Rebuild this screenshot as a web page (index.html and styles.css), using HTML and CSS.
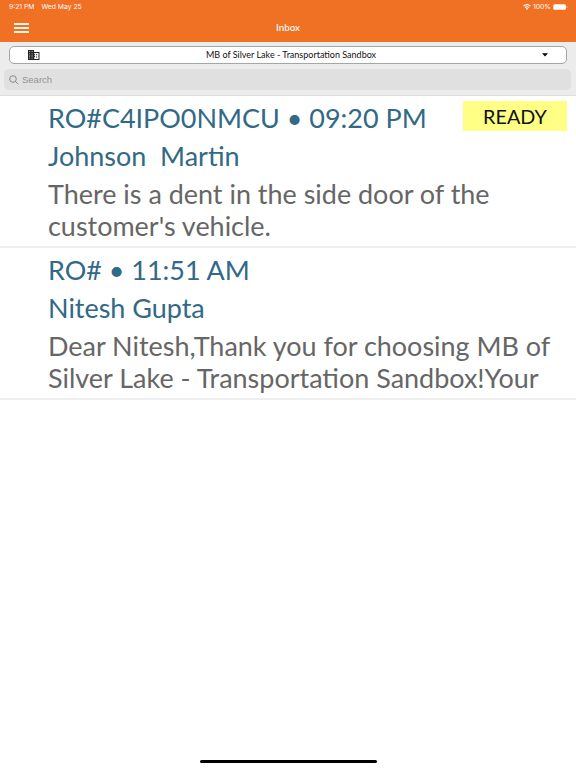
FILE: index.html
```html
<!DOCTYPE html>
<html lang="en">
<head>
<meta charset="utf-8">
<title>Inbox</title>
<link rel="stylesheet" href="styles.css">
</head>
<body>
<header class="top">
  <div class="status">
    <span class="time">9:21 PM</span><span class="date">Wed May 25</span>
    <svg class="wifi" width="8" height="6" viewBox="0 0 8 6" fill="none" stroke="#fff" stroke-width="1.1"><path d="M.5 2.2Q4-1 7.500 2.200M1.900 3.700Q4 1.900 6.100 3.700"/><path d="M2.800 4.500L4 6 5.200 4.500Q4 3.700 2.800 4.500Z" fill="#fff" stroke="none"/></svg>
    <span class="percent">100%</span>
    <svg class="battery" width="15" height="6" viewBox="0 0 15 6"><rect x=".25" y=".25" width="12.700" height="5.500" rx="1.600" fill="#fff"/><path d="M13.700 2v2q.8-.3.8-1t-.8-1Z" fill="#fff" opacity=".7"/></svg>
  </div>
  <nav class="nav">
    <div class="menu"><i></i><i></i><i></i></div>
    <h1 class="title">Inbox</h1>
  </nav>
</header>
<section class="filters">
  <div class="select">
    <svg class="building" width="12" height="10" viewBox="0 0 12 10"><path fill="#222" fill-rule="evenodd" d="M0 0h6v2h5.500v8H0ZM1.200 1.200v.8h1v-.8Zm2.400 0v.8h1v-.8ZM1.200 3.400v.8h1v-.8Zm2.400 0v.8h1v-.8ZM1.200 5.600v.8h1v-.8Zm2.400 0v.8h1v-.8ZM1.200 7.800v.8h1v-.8Zm2.400 0v.8h1v-.8ZM6.300 3v1.200h.7v1h-.7V6H7v1h-.7V9h4.200V3ZM8 4.200h1.200v1H8Zm0 2.200h1.200v1H8Z"/></svg>
    <span class="dealer">MB of Silver Lake - Transportation Sandbox</span>
    <svg class="caret" width="6" height="4" viewBox="0 0 6 4"><path d="M0 .3h6L3 3.600Z"/></svg>
  </div>
  <div class="search">
    <svg width="10" height="10" viewBox="0 0 10 10" fill="none" stroke="#7e7e82" stroke-width=".9"><circle cx="4" cy="4" r="3.300"/><path d="M6.400 6.400L9.300 9.300"/></svg>
    <span class="placeholder">Search</span>
  </div>
</section>
<main>
  <article class="message">
    <div class="order">RO#C4IPO0NMCU • 09:20 PM</div>
    <div class="name">Johnson&nbsp; Martin</div>
    <p class="preview">There is a dent in the side door of the<br>customer's vehicle.</p>
    <span class="badge">READY</span>
  </article>
  <article class="message">
    <div class="order">RO# • 11:51 AM</div>
    <div class="name">Nitesh Gupta</div>
    <p class="preview">Dear Nitesh,Thank you for choosing MB of<br>Silver Lake - Transportation Sandbox!Your</p>
  </article>
</main>
<div class="home"></div>
</body>
</html>
```
FILE: styles.css
```css
* { box-sizing: border-box; }
body {
  margin: 0;
  height: 768px;
  display: flex;
  flex-direction: column;
  background: #fff;
  font-family: Lato, sans-serif;
  overflow: hidden;
}
.top { height: 42px; background: #f07024; color: #fff; }
.status {
  height: 14px;
  display: flex;
  align-items: center;
  padding: 0 8px 0 9px;
  font: 400 6.8px/14px Inter, sans-serif;
}
.date { margin-left: 7px; }
.wifi { margin-left: auto; }
.percent { margin: 0 2px; }
.nav {
  height: 27px;
  display: grid;
  grid-template-columns: 1fr auto 1fr;
  align-items: center;
}
.menu { width: 15px; margin: 1px 0 0 14px; display: grid; gap: 2px; }
.menu i { height: 2.300px; background: #fff6e6; }
.title { margin: 0; font: 500 9.800px/27px Lato, sans-serif; }
.filters {
  height: 54px;
  padding: 4px 9px 0;
  background: #ececec;
  border-bottom: 1px solid #dedede;
}
.select {
  height: 18px;
  border: 1px solid #a2a7a7;
  border-radius: 5px;
  background: #fff;
  display: grid;
  grid-template-columns: 1fr auto 1fr;
  align-items: center;
}
.building { margin-left: 18px; }
.dealer { font-size: 9px; line-height: 16px; color: #111; margin-left: 6px; }
.caret { justify-self: end; margin-right: 18px; }
.search {
  height: 21px;
  margin: 5px -4px 0 -5px;
  padding-left: 5px;
  border-radius: 5px;
  background: #e0e0e0;
  display: flex;
  align-items: center;
  gap: 3px;
}
.placeholder { font: 9.5px/20px "Liberation Sans", sans-serif; color: #929296; }
.message {
  position: relative;
  height: 152px;
  padding: 4px 0 0 48px;
  border-bottom: 2px solid #efefef;
  font-size: 26.96px;
  white-space: nowrap;
}
.order, .name { height: 38px; line-height: 36px; color: #316986; }
.preview { margin: 2px 0 0; line-height: 32px; color: #666; }
.badge {
  position: absolute;
  top: 5px;
  right: 9px;
  width: 104px;
  height: 30px;
  background: #ffff85;
  color: #111;
  font-size: 19.8px;
  line-height: 31px;
  text-align: center;
}
.home { width: 177px; height: 3px; margin: auto auto 5px; border-radius: 2px; background: #000; }
```
